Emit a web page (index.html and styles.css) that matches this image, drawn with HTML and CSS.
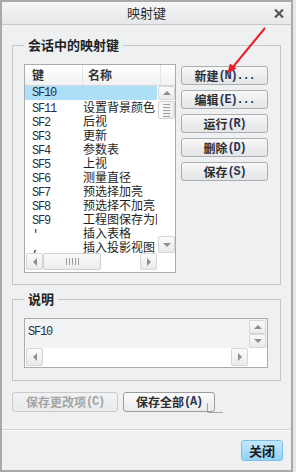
FILE: index.html
```html
<!DOCTYPE html>
<html lang="zh">
<head>
<meta charset="utf-8">
<title>映射键</title>
<link rel="stylesheet" href="styles.css">
</head>
<body>
<div class="win">
  <div class="titlebar">
    <span class="title">映射键</span>
    <svg class="xbtn" width="10" height="9" viewBox="0 0 10 9"><path d="M1 0.5 L9 8.5 M9 0.5 L1 8.5" stroke="#5a5a5a" stroke-width="2.2" fill="none"/></svg>
  </div>
  <div class="content">
    <fieldset class="group g1">
      <legend>会话中的映射键</legend>
      <div class="g1row">
        <div class="list">
          <div class="lhead">
            <div class="hc hk">键</div>
            <div class="hc hn">名称</div>
            <div class="hc hx"></div>
          </div>
          <div class="lbody">
            <div class="rows">
              <div class="row sel"><span class="k">SF10</span><span class="n"></span></div>
              <div class="row"><span class="k">SF11</span><span class="n">设置背景颜色</span></div>
              <div class="row"><span class="k">SF2</span><span class="n">后视</span></div>
              <div class="row"><span class="k">SF3</span><span class="n">更新</span></div>
              <div class="row"><span class="k">SF4</span><span class="n">参数表</span></div>
              <div class="row"><span class="k">SF5</span><span class="n">上视</span></div>
              <div class="row"><span class="k">SF6</span><span class="n">测量直径</span></div>
              <div class="row"><span class="k">SF7</span><span class="n">预选择加亮</span></div>
              <div class="row"><span class="k">SF8</span><span class="n">预选择不加亮</span></div>
              <div class="row"><span class="k">SF9</span><span class="n">工程图保存为图像</span></div>
              <div class="row"><span class="k">'</span><span class="n">插入表格</span></div>
              <div class="row"><span class="k">,</span><span class="n">插入投影视图</span></div>
            </div>
            <div class="vscroll">
              <div class="sb sbv up"><i class="tri tu"></i></div>
              <div class="thumbv"><i></i><i></i><i></i><i></i><i></i></div>
              <div class="vtrack"></div>
              <div class="sb sbv dn"><i class="tri td"></i></div>
            </div>
          </div>
          <div class="hrow">
            <div class="hscroll">
              <div class="sb sbh"><i class="tri tl"></i></div>
              <div class="thumbh"><i></i><i></i><i></i><i></i><i></i></div>
              <div class="htrack"></div>
              <div class="sb sbh"><i class="tri tr"></i></div>
            </div>
            <div class="corner"></div>
          </div>
        </div>
        <div class="btns">
          <button class="btn">新建<span class="l">(N)...</span></button>
          <button class="btn">编辑<span class="l">(E)...</span></button>
          <button class="btn">运行<span class="l">(R)</span></button>
          <button class="btn">删除<span class="l">(D)</span></button>
          <button class="btn">保存<span class="l">(S)</span></button>
        </div>
      </div>
    </fieldset>
    <fieldset class="group g2">
      <legend>说明</legend>
      <div class="desc">
        <div class="dtext"><span class="l">SF10</span></div>
        <div class="dvs">
          <div class="sb dsb"><i class="tri tu"></i></div>
          <div class="sb dsb"><i class="tri td"></i></div>
        </div>
        <div class="dhs">
          <div class="sb sbh"><i class="tri tl"></i></div>
          <div class="htrack"></div>
          <div class="sb sbh"><i class="tri tr"></i></div>
        </div>
        <div class="dcorner"></div>
      </div>
    </fieldset>
    <div class="brow">
      <button class="btn dis">保存更改项<span class="l">(C)</span></button>
      <button class="btn def">保存全部<span class="l">(A)</span></button>
    </div>
  </div>
  <div class="footer">
    <button class="btn closebtn">关闭</button>
  </div>
  <svg class="arrow" width="296" height="90" viewBox="0 0 296 90">
    <line x1="265" y1="28" x2="232.5" y2="67.5" stroke="#e8222b" stroke-width="2"/>
    <polygon points="227,74 236.6,68.6 230,63.4" fill="#e8222b"/>
  </svg>
</div>
</body>
</html>
```

FILE: styles.css
```css
* { box-sizing: border-box; }
html, body { margin: 0; padding: 0; }
body {
  width: 296px;
  height: 472px;
  overflow: hidden;
  background: #e6e7e8;
  font-family: "Noto Sans CJK SC", sans-serif;
  font-size: 12px;
  color: #222;
}
.l {
  font-family: "Liberation Mono", monospace;
  letter-spacing: -1.2px;
}
button {
  font: inherit;
  margin: 0;
  padding: 0;
  color: inherit;
}

.win {
  position: relative;
  width: 293px;
  height: 472px;
  border: 2px solid #a8a9aa;
  background: #eff0f1;
  display: flex;
  flex-direction: column;
}

.titlebar {
  flex: none;
  height: 23px;
  display: grid;
  grid-template-columns: 1fr auto 1fr;
  align-items: center;
  background: linear-gradient(#f6f6f7, #e6e7e8);
  border-bottom: 1px solid #c6c7c8;
}
.title {
  grid-column: 2;
  font-size: 13px;
  line-height: 16px;
  color: #2e2e2e;
}
.xbtn {
  grid-column: 3;
  justify-self: end;
  margin-right: 7px;
  margin-top: 1px;
}

.content {
  flex: 1;
  padding: 12px 10px 0 10px;
  display: flex;
  flex-direction: column;
}

.group {
  margin: 0;
  border: 1px solid #c5c6c8;
  min-width: 0;
}
.group legend {
  padding: 0 4px;
  font-size: 13px;
  font-weight: bold;
  line-height: 16px;
  color: #222;
}
.g1 { padding: 11px 12px 11px 11px; }
.g2 { margin-top: 6px; padding: 11px 12px 12px 11px; }

.g1row {
  display: flex;
  gap: 5px;
}

/* list */
.list {
  width: 152px;
  height: 209px;
  border: 1px solid #a9aaab;
  background: #fff;
  display: flex;
  flex-direction: column;
}
.lhead {
  flex: none;
  height: 21px;
  display: flex;
  background: linear-gradient(#ffffff, #f1f2f3);
  border-bottom: 1px solid #d6d7d8;
}
.hc {
  font-weight: bold;
  font-size: 12px;
  line-height: 20px;
  color: #333;
  border-right: 1px solid #e2e3e4;
}
.hk { width: 58px; padding-left: 7px; }
.hn { width: 78px; padding-left: 5px; }
.hx { flex: 1; border-right: none; }

.lbody {
  flex: none;
  height: 167px;
  display: flex;
}
.rows {
  width: 132px;
  overflow: hidden;
}
.row {
  height: 14px;
  display: flex;
  align-items: baseline;
  white-space: nowrap;
  line-height: 14px;
}
.row.sel { background: #aedff8; }
.row .k {
  flex: none;
  width: 58px;
  padding-left: 7px;
  font-family: "Liberation Mono", monospace;
  letter-spacing: -1.2px;
  color: #2c3140;
}
.row .n {
  color: #1e1e1e;
}

.vscroll {
  width: 17px;
  margin-left: 1px;
  display: flex;
  flex-direction: column;
  background: #fff;
}
.sb {
  display: flex;
  align-items: center;
  justify-content: center;
  border: 1px solid #d5d6d8;
  border-radius: 2px;
  background: linear-gradient(#fbfbfb, #e9eaeb);
}
.sbv { height: 14px; flex: none; }
.sbv.dn { height: 17px; }
.thumbv {
  margin-top: 1px;
  height: 18px;
  border: 1px solid #cfd0d2;
  border-radius: 2px;
  background: linear-gradient(90deg, #fafafa, #ececed);
  display: flex;
  flex-direction: column;
  align-items: center;
  justify-content: center;
  gap: 2px;
}
.thumbv i { display: block; width: 7px; height: 1px; background: #9c9d9f; }
.vtrack { flex: 1; }

.tri { display: block; width: 0; height: 0; }
.tu { border-left: 4px solid transparent; border-right: 4px solid transparent; border-bottom: 4px solid #8e8f91; }
.td { border-left: 4px solid transparent; border-right: 4px solid transparent; border-top: 4px solid #8e8f91; }
.tl { border-top: 4px solid transparent; border-bottom: 4px solid transparent; border-right: 4px solid #8e8f91; }
.tr { border-top: 4px solid transparent; border-bottom: 4px solid transparent; border-left: 4px solid #8e8f91; }

.hrow {
  flex: none;
  height: 17px;
  display: flex;
}
.hscroll {
  width: 132px;
  display: flex;
  padding-left: 1px;
}
.sbh { width: 17px; flex: none; }
.thumbh {
  width: 58px;
  flex: none;
  border: 1px solid #cfd0d2;
  border-radius: 2px;
  background: linear-gradient(#fafafa, #ececed);
  display: flex;
  align-items: center;
  justify-content: center;
  gap: 2px;
}
.thumbh i { display: block; width: 1px; height: 7px; background: #9c9d9f; }
.htrack { flex: 1; }
.corner { flex: 1; }

/* right buttons */
.btns {
  width: 87px;
  margin-top: 2px;
  display: flex;
  flex-direction: column;
  gap: 5px;
}
.btn {
  position: relative;
  height: 19px;
  border: 1px solid #acadaf;
  border-radius: 3px;
  background: linear-gradient(#f8f8f8, #e3e4e5);
  font-weight: bold;
  font-size: 12px;
  line-height: 16px;
  color: #2e2e2e;
  display: flex;
  align-items: center;
  justify-content: center;
  white-space: nowrap;
}
.btn .l { color: #2c3556; }

/* description */
.desc {
  width: 244px;
  height: 50px;
  border: 1px solid #abacad;
  background: #fff;
  display: grid;
  grid-template-columns: 1fr 19px;
  grid-template-rows: 29px 18px;
}
.dtext {
  background: #f2f3f4;
  padding: 4px 0 0 3px;
  line-height: 14px;
  color: #2c3140;
}
.dvs {
  background: #f2f3f4;
  display: flex;
  flex-direction: column;
  padding: 1px 1px 0 1px;
}
.dsb { height: 14px; flex: none; }
.dhs { display: flex; padding: 0 0 0 1px; }
.dcorner { background: #fff; }

/* bottom row */
.brow {
  margin-top: 11px;
  display: flex;
  gap: 5px;
}
.brow .btn { height: 20px; }
.btn.dis {
  width: 106px;
  color: #a3a4a6;
  border-color: #c9cacc;
  background: linear-gradient(#f1f2f3, #e9eaeb);
}
.btn.dis .l { color: #a3a4a6; }
.btn.def {
  width: 92px;
  border-color: #9c9d9f;
  background: linear-gradient(#fbfbfb, #ececed);
}
.btn.def::after {
  content: "";
  position: absolute;
  left: 83px;
  top: 10px;
  width: 15px;
  height: 9px;
  border-left: 1px solid #a4a5a7;
  border-bottom: 1px solid #a4a5a7;
  border-bottom-left-radius: 2px;
}

.footer {
  flex: none;
  border-top: 1px solid #d2d3d5;
  box-shadow: inset 0 1px 0 #fafafa;
  padding: 10px 8px 9px 0;
  display: flex;
  justify-content: flex-end;
}
.btn.closebtn {
  width: 42px;
  height: 21px;
  border-color: #7dbfe6;
  background: linear-gradient(#c4e8fc, #93d2f6);
  color: #1a1a1a;
  font-size: 13px;
}

.arrow {
  position: absolute;
  left: -2px;
  top: -2px;
  pointer-events: none;
}
```
